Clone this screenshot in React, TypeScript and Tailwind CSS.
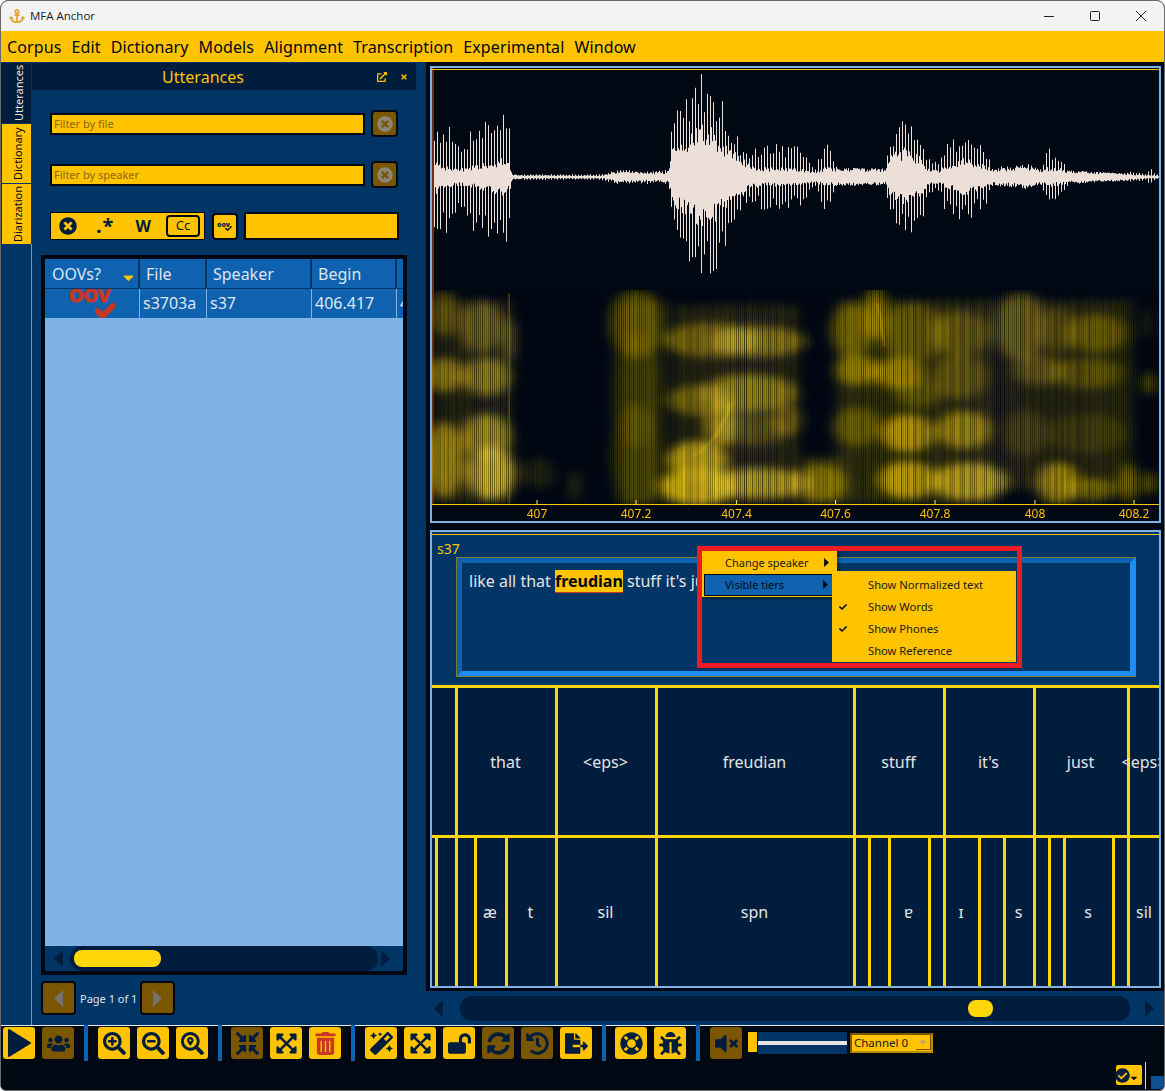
import React from 'react';
import {
  FaAnchor, FaBug, FaCaretDown, FaCheck, FaCheckCircle, FaCompressArrowsAlt, FaExpandArrowsAlt, FaExternalLinkAlt,
  FaFileExport, FaHistory, FaLifeRing, FaLockOpen, FaMagic, FaSearchLocation, FaSearchMinus, FaSearchPlus, FaSyncAlt,
  FaTimes, FaTimesCircle, FaTrashAlt, FaUsers, FaVolumeMute,
} from 'react-icons/fa';

const menus = ['Corpus', 'Edit', 'Dictionary', 'Models', 'Alignment', 'Transcription', 'Experimental', 'Window'];

const words = [
  { w: 'w-[23px]', label: '', first: true },
  { w: 'w-[100px]', label: 'that' },
  { w: 'w-[100px]', label: '<eps>' },
  { w: 'w-[198px]', label: 'freudian' },
  { w: 'w-[90px]', label: 'stuff' },
  { w: 'w-[90px]', label: "it's" },
  { w: 'w-[94px]', label: 'just' },
  { w: 'w-[33px]', label: '<eps>' },
];

const phones = [
  { w: 'w-[3px]', label: '', first: true },
  { w: 'w-[20px]', label: '' },
  { w: 'w-[19px]', label: '' },
  { w: 'w-[31px]', label: 'æ' },
  { w: 'w-[50px]', label: 't' },
  { w: 'w-[100px]', label: 'sil' },
  { w: 'w-[198px]', label: 'spn' },
  { w: 'w-[15px]', label: '' },
  { w: 'w-[20px]', label: '' },
  { w: 'w-[40px]', label: 'ɐ' },
  { w: 'w-[15px]', label: '' },
  { w: 'w-[35px]', label: 'ɪ' },
  { w: 'w-[25px]', label: '' },
  { w: 'w-[30px]', label: 's' },
  { w: 'w-[15px]', label: '' },
  { w: 'w-[15px]', label: '' },
  { w: 'w-[49px]', label: 's' },
  { w: 'w-[15px]', label: '' },
  { w: 'w-[33px]', label: 'sil' },
];

// x (page px), spike amplitude, solid core amplitude
const envelope = [
  [434, 52, 18], [445, 58, 12], [460, 30, 9], [475, 58, 12], [490, 62, 16], [505, 66, 20], [510, 60, 12], [512, 3, 3],
  [520, 3, 2], [600, 3, 1.5], [617, 7, 6], [660, 7, 5], [668, 8, 6], [672, 60, 30], [685, 88, 40], [703, 107, 58],
  [715, 95, 46], [730, 58, 30], [740, 35, 22], [750, 25, 12], [765, 36, 10], [800, 30, 9], [815, 10, 6], [825, 40, 10],
  [835, 15, 9], [840, 9, 9], [880, 9, 9], [885, 9, 8], [890, 42, 24], [905, 60, 30], [920, 52, 22], [928, 20, 9],
  [938, 15, 7], [945, 36, 12], [965, 46, 20], [985, 30, 12], [992, 10, 9], [1010, 11, 10], [1025, 14, 12], [1040, 9, 8],
  [1047, 30, 10], [1060, 22, 9], [1068, 8, 7], [1100, 5, 5], [1125, 4, 4], [1132, 6, 3], [1145, 3, 2], [1150, 10, 2],
  [1155, 3, 2], [1160, 2, 1],
];

// spectrogram blobs: cx, cy, rx, ry, opacity, in a 1568x720 space
const blobs = [
  [30, 70, 25, 60, 0.4], [110, 110, 40, 70, 0.45], [30, 255, 35, 45, 0.6], [120, 260, 45, 50, 0.6], [30, 510, 35, 100, 0.7],
  [120, 440, 45, 60, 0.7], [130, 550, 45, 70, 0.9], [170, 150, 6, 60, 0.8], [440, 100, 50, 90, 0.35], [440, 300, 45, 150, 0.15],
  [440, 500, 45, 140, 0.2], [600, 150, 90, 45, 0.5], [700, 155, 90, 40, 0.55], [575, 330, 60, 40, 0.5], [680, 310, 90, 50, 0.6],
  [620, 400, 30, 60, 0.7], [570, 510, 55, 50, 0.9], [570, 590, 70, 50, 1], [700, 580, 100, 40, 0.75], [830, 580, 50, 50, 0.55],
  [760, 390, 30, 40, 0.4], [680, 420, 80, 40, 0.3], [900, 120, 40, 70, 0.4], [950, 70, 20, 70, 0.55], [1030, 130, 60, 80, 0.35],
  [1130, 130, 55, 60, 0.35], [910, 240, 40, 40, 0.55], [1000, 250, 50, 40, 0.6], [1130, 260, 50, 60, 0.35], [1040, 310, 40, 40, 0.35],
  [910, 410, 45, 50, 0.35], [1020, 430, 50, 50, 0.75], [1140, 420, 50, 50, 0.65], [1020, 570, 55, 50, 0.8], [1150, 575, 70, 50, 0.8],
  [1260, 110, 50, 90, 0.4], [1420, 130, 60, 50, 0.35], [1340, 120, 40, 60, 0.25], [1300, 240, 50, 40, 0.35], [1400, 250, 70, 40, 0.3],
  [1270, 430, 40, 60, 0.2], [1400, 430, 80, 50, 0.15], [1340, 580, 40, 55, 0.7], [1410, 600, 50, 30, 0.45], [1490, 580, 15, 50, 0.55],
  [1535, 280, 10, 30, 0.5], [1535, 580, 10, 30, 0.6], [1530, 100, 5, 40, 0.3], [310, 590, 6, 40, 0.4], [230, 550, 30, 40, 0.15],
];

// low haze behind the blobs: x, width, y, height, opacity
const haze = [
  [8, 165, 35, 607, 0.14], [400, 100, 30, 612, 0.18], [518, 270, 45, 597, 0.16], [790, 90, 500, 142, 0.2],
  [868, 340, 30, 612, 0.18], [1218, 280, 30, 570, 0.16],
];

const ticks = [[537, '407'], [636, '407.2'], [736.6, '407.4'], [835.5, '407.6'], [935, '407.8'], [1035, '408'], [1134, '408.2']] as const;

function seeded(seed: number) {
  let s = seed;
  return () => {
    s = (s * 1664525 + 1013904223) % 4294967296;
    return s / 4294967296;
  };
}

function ampAt(x: number) {
  for (let i = 1; i < envelope.length; i++) {
    if (x <= envelope[i][0]) {
      const [x0, a0, c0] = envelope[i - 1];
      const [x1, a1, c1] = envelope[i];
      const t = (x - x0) / (x1 - x0);
      return [a0 + (a1 - a0) * t, c0 + (c1 - c0) * t];
    }
  }
  return [2, 1];
}

function wavePaths() {
  const rand = seeded(7);
  let spikes = '';
  let core = '';
  const cy = 177 - 68;
  for (let x = 434; x < 1160; x += 3) {
    const [a] = ampAt(x);
    const up = a * (0.6 + 0.4 * rand());
    const down = a * (0.6 + 0.4 * rand());
    spikes += `M${x - 432 + 0.5} ${(cy - up).toFixed(1)}V${(cy + down).toFixed(1)}`;
  }
  for (let x = 434; x < 1160; x += 1) {
    const [, c] = ampAt(x);
    const up = c * (0.55 + 0.45 * rand());
    const down = c * (0.55 + 0.45 * rand());
    core += `M${x - 432 + 0.5} ${(cy - up).toFixed(1)}V${(cy + down).toFixed(1)}`;
  }
  return { spikes, core };
}

function stripes() {
  const rand = seeded(23);
  const out: { x: number; o: number }[] = [];
  for (let x = 0; x < 1568; x += 4.3) out.push({ x, o: 0.2 + rand() * 0.7 });
  return out;
}

const wave = wavePaths();
const bars = stripes();

function AudioView() {
  return (
    <svg width="727" height="453" className="block">
      <defs>
        <filter id="specBlur" x="-10%" y="-10%" width="120%" height="120%">
          <feGaussianBlur stdDeviation="14 13" />
        </filter>
        <clipPath id="specClip">
          <rect x="0" y="0" width="1568" height="642" />
        </clipPath>
      </defs>
      <line x1="1" y1="0" x2="1" y2="436" stroke="#d9541e" strokeWidth="1" />
      <line x1="0" y1="1.5" x2="727" y2="1.5" stroke="#ffc300" strokeWidth="1" />
      <path d={wave.spikes} stroke="#ecdfd8" strokeWidth="1" />
      <path d={wave.core} stroke="#ecdfd8" strokeWidth="1" />
      <g transform="translate(-2 222) scale(0.4688 0.3333)" clipPath="url(#specClip)">
        <g filter="url(#specBlur)">
          {haze.map(([x, w, y, h, o], i) => (
            <rect key={i} x={x} y={y} width={w} height={h} fill="#ffd60a" opacity={o} />
          ))}
          {blobs.map(([cx, cy, rx, ry, o], i) => (
            <ellipse key={i} cx={cx} cy={cy} rx={rx * 1.15} ry={ry * 1.15} fill="#ffd60a" opacity={o * 0.9} />
          ))}
        </g>
        <path d="M560 500 Q620 450 640 340" stroke="#ffd60a" strokeWidth="10" fill="none" opacity="0.35" />
        <path d="M955 40 L970 170" stroke="#ffd60a" strokeWidth="7" fill="none" opacity="0.25" />
        <line x1="168" y1="10" x2="168" y2="640" stroke="#ffd60a" strokeWidth="4" opacity="0.4" />
        {bars.map(b => (
          <line key={b.x} x1={b.x} y1="0" x2={b.x} y2="642" stroke="#000814" strokeWidth="2" opacity={b.o} />
        ))}
      </g>
      <line x1="0" y1="436.5" x2="727" y2="436.5" stroke="#ffc300" strokeWidth="1" />
      {ticks.map(([x, label]) => (
        <g key={label}>
          <line x1={x - 432} y1="432" x2={x - 432} y2="436" stroke="#ffe680" strokeWidth="1" />
          <text x={x - 432} y="450" textAnchor="middle" fontSize="12" fill="#ffc300">{label}</text>
        </g>
      ))}
    </svg>
  );
}

function Triangle({ dir, className }: { dir: 'left' | 'right'; className: string }) {
  return (
    <svg width="9" height="17" viewBox="0 0 9 17" className={className}>
      <polygon points={dir === 'left' ? '9,0 9,17 0,8.5' : '0,0 0,17 9,8.5'} fill="currentColor" />
    </svg>
  );
}

function ToolButton({ icon, off, red }: { icon: React.ReactNode; off?: boolean; red?: boolean }) {
  return (
    <div
      className={`w-[32px] h-[32px] rounded-[3px] flex items-center justify-center text-[23px] ${off ? 'bg-[#7a5600]' : 'bg-[#ffc300]'} ${red ? 'text-[#c8371f]' : 'text-[#001d3d]'}`}
    >
      {icon}
    </div>
  );
}

function Separator({ right }: { right: string }) {
  return <div className={`w-[4px] h-[36px] -mt-[2px] bg-[#0e62b0] ml-[10px] ${right}`} />;
}

function ClearButton() {
  return (
    <div className="w-[27px] h-[27px] rounded-[4px] border-2 border-[#000814] bg-[#7a5600] flex items-center justify-center text-[#8b8578] text-[16px]">
      <FaTimesCircle />
    </div>
  );
}

function Tier({ cells, height }: { cells: { w: string; label: string; first?: boolean }[]; height: string }) {
  return (
    <div className={`flex overflow-hidden border-t-[3px] border-[#ffd60a] ${height}`}>
      {cells.map((c, i) => (
        <div
          key={i}
          className={`${c.w} shrink-0 flex items-center justify-center whitespace-nowrap text-[16px] text-[#e4e4e4] ${c.first ? '' : 'border-l-[3px] border-[#ffd60a] pr-[2px]'}`}
        >
          {c.label}
        </div>
      ))}
    </div>
  );
}

export default function App() {
  return (
    <div className="w-[1165px] h-[1091px] overflow-hidden rounded-t-lg rounded-b-md border border-[#6a6a6a] bg-[#000814] font-['Noto_Sans',sans-serif]">
      {/* Title bar */}
      <div className="h-[30px] bg-[#f3f3f3] flex items-center text-[11.5px] text-[#1a1a1a]">
        <FaAnchor className="ml-[8px] text-[16px] text-[#e0a92c]" />
        <span className="ml-[5px] font-['Open_Sans',sans-serif]">MFA Anchor</span>
        <div className="ml-auto flex items-center">
          <div className="w-[46px] flex justify-center">
            <svg width="10" height="10" viewBox="0 0 10 10"><line x1="0" y1="5.5" x2="10" y2="5.5" stroke="#222" /></svg>
          </div>
          <div className="w-[46px] flex justify-center">
            <svg width="10" height="10" viewBox="0 0 10 10"><rect x="0.5" y="0.5" width="9" height="9" rx="1" fill="none" stroke="#222" /></svg>
          </div>
          <div className="w-[46px] flex justify-center">
            <svg width="10" height="10" viewBox="0 0 10 10"><path d="M0 0L10 10M10 0L0 10" stroke="#222" /></svg>
          </div>
        </div>
      </div>

      {/* Menu bar */}
      <div className="h-[31px] bg-[#ffc300] flex items-center gap-[10px] pl-[6px] text-[16px] tracking-[0.12px] text-[#000814]">
        {menus.map(m => <span key={m}>{m}</span>)}
      </div>

      {/* Main area */}
      <div className="h-[963px] flex bg-[#003566]">
        {/* Dock tabs */}
        <div className="w-[31px] flex flex-col pt-[1px] text-[11px] leading-none">
          <div className="h-[60px] w-[30px] bg-[#001d3d] text-[#f2ead0] flex items-center justify-center [writing-mode:vertical-rl] rotate-180 pr-[5px]">Utterances</div>
          <div className="h-[59px] w-[29px] ml-[1px] mt-[1px] bg-[#ffc300] text-[#000814] flex items-center justify-center [writing-mode:vertical-rl] rotate-180 pr-[2px]">Dictionary</div>
          <div className="h-[60px] w-[29px] ml-[1px] mt-[1px] bg-[#ffc300] text-[#000814] flex items-center justify-center [writing-mode:vertical-rl] rotate-180 pr-[2px]">Diarization</div>
          <div className="flex-1 border-r border-[#7b93ad]" />
        </div>

        {/* Utterances dock */}
        <div className="w-[394px]">
          <div className="w-[384px] h-[27px] mt-[1px] bg-[#001d3d] flex items-center relative text-[#ffc300]">
            <span className="w-full text-center text-[16px] pr-[42px]">Utterances</span>
            <FaExternalLinkAlt className="absolute left-[345px] top-[9px] text-[10px]" />
            <FaTimes className="absolute left-[368px] top-[10px] text-[8px]" />
          </div>

          <div className="ml-[18px] mt-[20px] flex items-center gap-[6px]">
            <div className="w-[315px] h-[22px] bg-[#ffc300] border-2 border-[#000814] pl-[2px] text-[11px] leading-[18px] text-[#8a6a10]">Filter by file</div>
            <ClearButton />
          </div>
          <div className="ml-[18px] mt-[24px] flex items-center gap-[6px]">
            <div className="w-[315px] h-[22px] bg-[#ffc300] border-2 border-[#000814] pl-[2px] text-[11px] leading-[18px] text-[#8a6a10]">Filter by speaker</div>
            <ClearButton />
          </div>

          <div className="ml-[18px] mt-[24px] flex items-center">
            <div className="w-[155px] h-[28px] bg-[#ffc300] border border-[#000814] flex items-center text-[#001d3d] relative">
              <FaTimesCircle className="ml-[8px] text-[18px]" />
              <span className="ml-[19px] text-[20px] font-bold leading-none tracking-[1px]">.*</span>
              <span className="ml-[21px] text-[16px] font-bold leading-none">W</span>
              <span className="ml-[15px] w-[34px] h-[22px] rounded-[4px] border-2 border-[#000814] flex items-center justify-center text-[13px]">Cc</span>
            </div>
            <div className="ml-[7px] w-[26px] h-[27px] rounded-[4px] border-2 border-[#000814] bg-[#ffc300] flex flex-col items-center justify-center text-[#001d3d] leading-none">
              <span className="text-[7px] font-black -mb-[3px] -ml-[3px]">oov</span>
              <FaCheck className="text-[7px] ml-[6px]" />
            </div>
            <div className="ml-[6px] w-[155px] h-[28px] bg-[#ffc300] border-2 border-[#000814]" />
          </div>

          {/* Utterance table */}
          <div className="ml-[9px] mt-[15px] w-[366px] h-[720px] bg-[#000814] px-[4px] pt-[4px] pb-[4px] flex flex-col">
            <div className="flex h-[30px] bg-[#0e62b0] text-[16px] text-[#dfe6ee] leading-[30px] border-b border-[#003566]">
              <div className="w-[95px] pl-[7px] border-r-2 border-[#003566] relative">
                OOVs?
                <FaCaretDown className="absolute left-[75px] top-[10px] text-[#ffc300] text-[17px]" />
              </div>
              <div className="w-[67px] pl-[6px] border-r-2 border-[#003566]">File</div>
              <div className="w-[105px] pl-[6px] border-r-2 border-[#003566]">Speaker</div>
              <div className="w-[85px] pl-[6px] border-r-2 border-[#003566]">Begin</div>
            </div>
            <div className="flex h-[30px] bg-[#0e62b0] text-[16px] text-[#dfe6ee] leading-[29px] border-b border-[#7eb3e3] overflow-hidden">
              <div className="w-[95px] shrink-0 border-r border-[#7eb3e3] relative text-[#c8371f]">
                <span className="absolute left-[24px] -top-[7px] text-[17px] font-bold font-['DejaVu_Sans',sans-serif] leading-[29px] whitespace-nowrap [-webkit-text-stroke:1px_#c8371f]">OOV</span>
                <FaCheck className="absolute left-[50px] top-[12px] text-[20px] [stroke-width:50] stroke-[#c8371f]" />
              </div>
              <div className="w-[67px] shrink-0 pl-[3px] border-r border-[#7eb3e3]">s3703a</div>
              <div className="w-[105px] shrink-0 pl-[3px] border-r border-[#7eb3e3]">s37</div>
              <div className="w-[85px] shrink-0 pl-[3px] border-r border-[#7eb3e3]">406.417</div>
              <div className="pl-[3px]">4</div>
            </div>
            <div className="flex-1 bg-[#7eb3e3]" />
            <div className="h-[25px] bg-[#003566] flex items-center text-[#001d3d]">
              <Triangle dir="left" className="ml-[9px]" />
              <div className="ml-[7px] w-[308px] h-[25px] rounded-[12px] bg-[#001d3d] pl-[4px] flex items-center">
                <div className="w-[87px] h-[17px] rounded-[8px] bg-[#ffd60a]" />
              </div>
              <Triangle dir="right" className="ml-[3px]" />
            </div>
          </div>

          <div className="ml-[9px] mt-[6px] flex items-center">
            <div className="w-[35px] h-[34px] rounded-[4px] border-2 border-[#000814] bg-[#7a5600] flex items-center justify-center text-[#77736c]">
              <Triangle dir="left" className="" />
            </div>
            <span className="ml-[4px] w-[60px] whitespace-nowrap text-[11px] text-[#dfe6ee] pt-[2px]">Page 1 of 1</span>
            <div className="w-[35px] h-[34px] rounded-[4px] border-2 border-[#000814] bg-[#7a5600] flex items-center justify-center text-[#77736c]">
              <Triangle dir="right" className="" />
            </div>
          </div>
        </div>

        {/* Audio and transcript */}
        <div className="w-[738px]">
          <div className="h-[929px] bg-[#000814] pt-[4px] pl-[4px]">
            <div className="w-[731px] h-[457px] border-2 border-[#7eb3e3]">
              <AudioView />
            </div>

            <div className="mt-[7px] w-[731px] h-[458px] border-2 border-[#7eb3e3] bg-[#001d3d] relative">
              <div className="h-[153px] bg-[#003566] pt-[2px]">
                <div className="h-[1px] bg-[#ffc300]" />
                <div className="ml-[5px] mt-[5px] text-[14px] leading-[18px] text-[#ffc300]">s37</div>
                <div className="ml-[25px] w-[678px] h-[118px] border-[5px] border-t-[#0e62b0] border-l-[#0e62b0] border-b-[#1e8cf0] border-r-[#1e8cf0] outline outline-[1px] outline-[#7d7d2a] pl-[7px] pt-[6px] text-[16px] leading-[24px] text-[#e4e4e4] overflow-hidden whitespace-nowrap">
                  like all that <span className="bg-[#ffc300] font-bold text-[#000814] border-b border-[#c8371f] inline-block leading-[22px]">freudian</span> stuff it's just
                </div>
              </div>
              <Tier cells={words} height="h-[150px]" />
              <Tier cells={phones} height="h-[151px]" />

              {/* Context menu with its submenu */}
              <div className="absolute left-[270px] top-[19px] w-[135px] h-[46px] bg-[#ffc300] text-[11px] text-[#1a1a1a] shadow-[2px_2px_3px_rgba(0,0,0,0.4)]">
                <div className="h-[23px] pl-[23px] leading-[23px] relative">
                  Change speaker
                  <Triangle dir="right" className="absolute left-[122px] top-[7px] w-[5px] h-[9px] text-[#000814]" />
                </div>
                <div className="ml-[2px] w-[130px] h-[22px] bg-[#0e62b0] border border-[#000814] pl-[20px] leading-[20px] relative text-[#000814]">
                  Visible tiers
                  <Triangle dir="right" className="absolute left-[118px] top-[5px] w-[5px] h-[9px] text-[#000814]" />
                </div>
              </div>
              <div className="absolute left-[400px] top-[39px] w-[184px] h-[91px] bg-[#ffc300] text-[11.2px] text-[#1a1a1a] pt-[3px]">
                <div className="h-[22px] leading-[22px] pl-[36px]">Show Normalized text</div>
                <div className="h-[22px] leading-[22px] pl-[36px] relative">
                  <FaCheck className="absolute left-[7px] top-[7px] text-[8px] text-[#000814]" />
                  Show Words
                </div>
                <div className="h-[22px] leading-[22px] pl-[36px] relative">
                  <FaCheck className="absolute left-[7px] top-[7px] text-[8px] text-[#000814]" />
                  Show Phones
                </div>
                <div className="h-[22px] leading-[22px] pl-[36px]">Show Reference</div>
              </div>

              {/* Red annotation box */}
              <div className="absolute left-[265px] top-[14px] w-[325px] h-[122px] border-[5px] border-[#ed1c24]" />
            </div>
          </div>

          <div className="h-[34px] bg-[#003566] flex items-center text-[#001d3d]">
            <Triangle dir="left" className="ml-[8px]" />
            <div className="ml-[17px] w-[670px] h-[25px] rounded-[12px] bg-[#001d3d] pl-[508px] flex items-center">
              <div className="w-[25px] h-[17px] rounded-[8px] bg-[#ffd60a]" />
            </div>
            <Triangle dir="right" className="ml-[15px]" />
          </div>
        </div>
      </div>

      {/* Bottom toolbar */}
      <div className="h-[64px] border-t border-[#e8e8e8] bg-[#000814]">
        <div className="h-[36px] pl-[2px] pt-[1px] flex items-start">
          <div className="flex gap-[7px]">
            <ToolButton icon={<svg width="24" height="28" viewBox="0 0 24 28"><polygon points="2,1 23,14 2,27" fill="currentColor" stroke="currentColor" strokeWidth="2" strokeLinejoin="round" /></svg>} />
            <ToolButton off icon={<FaUsers />} />
          </div>
          <Separator right="mr-[10px]" />
          <div className="flex gap-[7px]">
            <ToolButton icon={<FaSearchPlus />} />
            <ToolButton icon={<FaSearchMinus />} />
            <ToolButton icon={<FaSearchLocation />} />
          </div>
          <Separator right="mr-[9px]" />
          <div className="flex gap-[7px]">
            <ToolButton off icon={<FaCompressArrowsAlt />} />
            <ToolButton icon={<FaExpandArrowsAlt />} />
            <ToolButton red icon={<FaTrashAlt />} />
          </div>
          <Separator right="mr-[10px]" />
          <div className="flex gap-[7px]">
            <ToolButton icon={<FaMagic />} />
            <ToolButton icon={<FaExpandArrowsAlt />} />
            <ToolButton icon={<FaLockOpen />} />
            <ToolButton off icon={<FaSyncAlt />} />
            <ToolButton off icon={<FaHistory />} />
            <ToolButton icon={<FaFileExport />} />
          </div>
          <Separator right="mr-[9px]" />
          <div className="flex gap-[7px]">
            <ToolButton icon={<FaLifeRing />} />
            <ToolButton icon={<FaBug />} />
          </div>
          <Separator right="mr-[10px]" />
          <ToolButton off icon={<FaVolumeMute />} />
          <div className="ml-[6px] mt-[5px] flex items-start">
            <div className="w-[9px] h-[20px] bg-[#ffc300]" />
            <div className="ml-[1px] w-[89px] h-[22px] bg-[#003566] flex items-center">
              <div className="w-full h-[4px] bg-[#e4e4e4]" />
            </div>
            <div className="ml-[3px] mt-[1px] w-[83px] h-[20px] bg-[#ffc300] border-2 border-t-[#7a5600] border-l-[#7a5600] border-b-[#b98d00] border-r-[#b98d00] flex items-center pl-[2px] text-[11.5px] text-[#1a1a1a] relative">
              Channel 0
              <div className="absolute right-0 top-0 w-[15px] h-[15px] bg-[#ffc300] border-r border-b border-[#7a5600] flex items-center justify-center text-[#a8a08a] text-[10px]">
                <FaCaretDown />
              </div>
            </div>
          </div>
        </div>
        <div className="h-[27px] flex justify-end items-end">
          <div className="w-[26px] h-[20px] mb-[4px] rounded-[2px] bg-[#ffc300] flex items-center text-[#001d3d]">
            <FaCheckCircle className="text-[15px] -ml-[1px]" />
            <FaCaretDown className="text-[10px] text-[#000814] -ml-[1px] mt-[6px]" />
          </div>
          <div className="ml-[3px] w-[1px] h-[27px] bg-[#d8d8d8]" />
          <div className="ml-[5px] w-[13px] h-[13px] bg-[#0e4f8f]" />
        </div>
      </div>
    </div>
  );
}
